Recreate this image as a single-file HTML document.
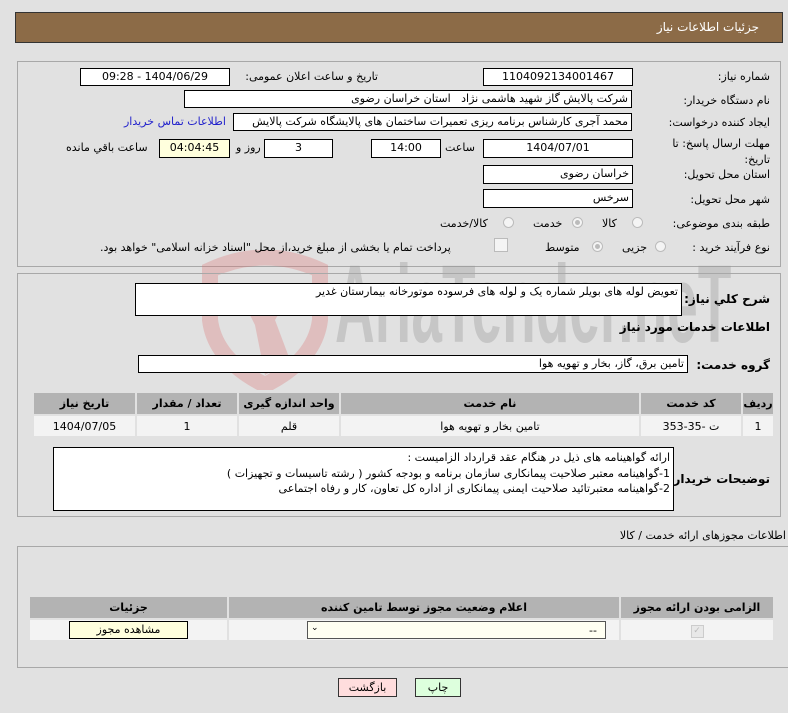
<!DOCTYPE html>
<html><head><meta charset="utf-8"><style>
body{margin:0;width:788px;height:713px;background:#e1e1e1;font-family:"DejaVu Sans","Liberation Sans",sans-serif;font-size:11px;color:#000;position:relative;overflow:hidden}
.a{position:absolute}
.in{position:absolute;background:#fff;border:1px solid #000;box-sizing:border-box;direction:rtl;padding:0 3px;line-height:16px;white-space:nowrap;overflow:hidden;font-size:11px}
.c{text-align:center}
.l{position:absolute;direction:rtl;white-space:nowrap;font-size:11px}
.panel{position:absolute;border:1px solid #a8a8a8;box-sizing:border-box;background:#e1e1e1}
.rad{position:absolute;width:11px;height:11px;border-radius:50%;border:1px solid #bbb;background:#f4f4f4;box-sizing:border-box}
.rad.on::after{content:"";position:absolute;left:2px;top:2px;width:5px;height:5px;border-radius:50%;background:#bbb}
table{border-collapse:separate;border-spacing:2px;direction:rtl;font-size:11px}
th{background:#b3b3b3;font-weight:bold;height:21px;padding:0}
td{background:#f3f3f3;height:20px;text-align:center;padding:0}
</style></head><body>
<div class="a" style="left:15px;top:12px;width:768px;height:31px;background:#8c6b47;border:1px solid #333;box-sizing:border-box"></div>
<div class="l" style="right:29px;top:20px;color:#fff;font-size:12px">جزئیات اطلاعات نیاز</div>

<div class="panel" style="left:17px;top:61px;width:764px;height:206px"></div>
<svg class="a" style="left:195px;top:250px" width="140" height="140" viewBox="0 0 140 140">
<path d="M15 20 Q70 -5 125 20 L125 70 Q120 110 70 135 Q20 110 15 70 Z" fill="none" stroke="rgba(220,110,110,0.3)" stroke-width="16"/>
<path d="M45 45 L95 45 L80 70 L95 110 L70 125 L60 75 Z" fill="rgba(220,110,110,0.3)"/>
</svg>
<div class="a" style="left:335px;top:250px;font-size:110px;line-height:110px;font-weight:bold;color:rgba(150,150,150,0.35);font-family:'Liberation Sans',sans-serif;transform:scaleX(0.5);transform-origin:left top;white-space:nowrap">AriaTender.neT</div>

<div class="l" style="right:18px;top:70px">شماره نیاز:</div>
<div class="in c" style="left:483px;top:68px;width:150px;height:18px">1104092134001467</div>
<div class="l" style="right:410px;top:70px">تاریخ و ساعت اعلان عمومی:</div>
<div class="in c" style="left:80px;top:68px;width:150px;height:18px">1404/06/29 - 09:28</div>

<div class="l" style="right:18px;top:94px">نام دستگاه خریدار:</div>
<div class="in" style="left:184px;top:90px;width:448px;height:18px">شرکت پالایش گاز شهید هاشمی نژاد &nbsp; استان خراسان رضوی</div>
<div class="l" style="right:18px;top:116px">ایجاد کننده درخواست:</div>
<div class="in" style="left:233px;top:113px;width:399px;height:18px">محمد آجری کارشناس برنامه ریزی تعمیرات ساختمان های پالایشگاه شرکت پالایش</div>
<div class="l" style="left:124px;top:115px;color:#2222cc">اطلاعات تماس خریدار</div>

<div class="l" style="right:18px;top:137px">مهلت ارسال پاسخ: تا</div>
<div class="l" style="right:18px;top:153px">تاریخ:</div>
<div class="in c" style="left:483px;top:139px;width:150px;height:19px">1404/07/01</div>
<div class="l" style="left:445px;top:141px">ساعت</div>
<div class="in c" style="left:371px;top:139px;width:70px;height:19px">14:00</div>
<div class="in c" style="left:264px;top:139px;width:69px;height:19px">3</div>
<div class="l" style="left:236px;top:141px">روز و</div>
<div class="in c" style="left:159px;top:139px;width:71px;height:19px;background:#ffffdd">04:04:45</div>
<div class="l" style="left:66px;top:141px">ساعت باقي مانده</div>

<div class="l" style="right:18px;top:168px">استان محل تحویل:</div>
<div class="in" style="left:483px;top:165px;width:150px;height:19px">خراسان رضوی</div>
<div class="l" style="right:18px;top:193px">شهر محل تحویل:</div>
<div class="in" style="left:483px;top:189px;width:150px;height:19px">سرخس</div>

<div class="l" style="right:18px;top:217px">طبقه بندی موضوعی:</div>
<div class="rad" style="left:632px;top:217px"></div><div class="l" style="left:602px;top:217px">کالا</div>
<div class="rad on" style="left:572px;top:217px"></div><div class="l" style="left:533px;top:217px">خدمت</div>
<div class="rad" style="left:503px;top:217px"></div><div class="l" style="left:440px;top:217px">کالا/خدمت</div>
<div class="l" style="right:18px;top:241px">نوع فرآیند خرید :</div>
<div class="rad" style="left:655px;top:241px"></div><div class="l" style="left:622px;top:241px">جزیی</div>
<div class="rad on" style="left:592px;top:241px"></div><div class="l" style="left:545px;top:241px">متوسط</div>
<div class="a" style="left:494px;top:238px;width:12px;height:12px;border:1px solid #bbb;background:#f4f4f4"></div>
<div class="l" style="left:100px;top:241px">پرداخت تمام یا بخشی از مبلغ خرید،از محل "اسناد خزانه اسلامی" خواهد بود.</div>

<div class="a" style="left:17px;top:273px;width:764px;height:244px;border:1px solid #a8a8a8;box-sizing:border-box"></div>
<div class="l" style="right:18px;top:292px;font-weight:bold;font-size:12px">شرح کلي نیاز:</div>
<div class="in" style="left:135px;top:283px;width:547px;height:33px;background:#fff">تعویض لوله های بویلر شماره یک و لوله های فرسوده موتورخانه بیمارستان غدیر</div>
<div class="l" style="right:18px;top:320px;font-weight:bold;font-size:12px">اطلاعات خدمات مورد نیاز</div>
<div class="l" style="right:18px;top:358px;font-weight:bold;font-size:12px">گروه خدمت:</div>
<div class="in" style="left:138px;top:355px;width:550px;height:18px">تامین برق، گاز، بخار و تهویه هوا</div>

<table class="a" style="left:32px;top:391px;width:743px">
<tr><th style="width:30px">ردیف</th><th style="width:100px">کد خدمت</th><th>نام خدمت</th><th style="width:100px">واحد اندازه گیری</th><th style="width:100px">تعداد / مقدار</th><th style="width:101px">تاریخ نیاز</th></tr>
<tr><td>1</td><td>ت -35-353</td><td>تامین بخار و تهویه هوا</td><td>قلم</td><td>1</td><td>1404/07/05</td></tr>
</table>

<div class="l" style="right:18px;top:472px;font-weight:bold;font-size:12px">توضیحات خریدار:</div>
<div class="in" style="left:53px;top:447px;width:621px;height:64px;white-space:normal;line-height:15.5px;padding-top:2px">ارائه گواهینامه های ذیل در هنگام عقد قرارداد الزامیست :<br>1-گواهینامه معتبر صلاحیت پیمانکاری سازمان برنامه و بودجه کشور ( رشته تاسیسات و تجهیزات )<br>2-گواهینامه معتبرتائید صلاحیت ایمنی پیمانکاری از اداره کل تعاون، کار و رفاه اجتماعی</div>

<div class="l" style="right:2px;top:529px">اطلاعات مجوزهای ارائه خدمت / کالا</div>
<div class="panel" style="left:17px;top:546px;width:775px;height:122px"></div>
<table class="a" style="left:28px;top:595px;width:747px">
<tr><th style="width:152px">الزامی بودن ارائه مجوز</th><th>اعلام وضعیت مجوز توسط تامین کننده</th><th style="width:197px">جزئیات</th></tr>
<tr><td><span style="display:inline-block;width:11px;height:11px;border:1px solid #ccc;background:#e8e8e8;color:#bbb;font-size:9px;line-height:11px">✓</span></td>
<td><div style="margin:0 auto 0 78px;width:299px;height:18px;border:1px solid #555;background:#fffff2;box-sizing:border-box;position:relative"><span style="position:absolute;right:8px;top:2px">--</span><span style="position:absolute;left:3px;top:1px;font-size:9px">⌄</span></div></td>
<td><div style="margin:0 auto;width:119px;height:18px;border:1px solid #000;background:#ffffdd;box-sizing:border-box;line-height:16px">مشاهده مجوز</div></td></tr>
</table>

<div class="a c" style="left:415px;top:678px;width:46px;height:19px;border:1px solid #333;background:#ddffdd;box-sizing:border-box;line-height:17px;direction:rtl">چاپ</div>
<div class="a c" style="left:338px;top:678px;width:59px;height:19px;border:1px solid #333;background:#ffdddd;box-sizing:border-box;line-height:17px;direction:rtl">بازگشت</div>
</body></html>
